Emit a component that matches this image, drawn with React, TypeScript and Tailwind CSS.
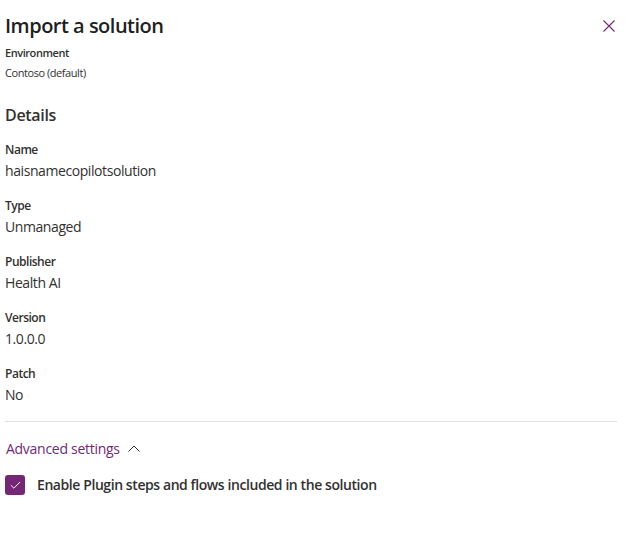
import { Check } from 'lucide-react'

const FIELDS = [
  { label: 'Name', value: 'haisnamecopilotsolution' },
  { label: 'Type', value: 'Unmanaged' },
  { label: 'Publisher', value: 'Health AI' },
  { label: 'Version', value: '1.0.0.0' },
  { label: 'Patch', value: 'No' },
]

export default function App() {
  return (
    <div className="h-[554px] w-[632px] bg-white pl-[5px] pr-[15px] text-[#323130] font-['Open_Sans',sans-serif]">
      <div className="flex h-[43px] items-start justify-between pt-[12px]">
        <h1 className="text-[20px] font-semibold leading-[28px] tracking-[-0.025em] text-[#201f1e]">Import a solution</h1>
        <button type="button" className="mr-[2px] mt-[8px] text-[#742774]" aria-label="Close">
          <svg width="12" height="12" viewBox="0 0 12 12" fill="none" stroke="currentColor" strokeWidth="1.1">
            <path d="M0.5 0.5 L11.5 11.5 M11.5 0.5 L0.5 11.5" />
          </svg>
        </button>
      </div>
      <div className="text-[11px] font-semibold leading-[20px] tracking-[-0.04em]">Environment</div>
      <div className="text-[11px] leading-[20px] tracking-[-0.04em]">Contoso (default)</div>

      <h2 className="mt-[20px] text-[16px] font-semibold leading-[24px] tracking-[-0.02em]">Details</h2>

      <div className="mt-[13px] flex flex-col gap-[14px]">
        {FIELDS.map((f) => (
          <div key={f.label}>
            <div className="text-[12px] font-semibold leading-[20px] tracking-[-0.04em]">{f.label}</div>
            <div className="text-[14px] leading-[22px] tracking-[-0.03em]">{f.value}</div>
          </div>
        ))}
      </div>

      <div className="mt-[15px] border-t border-[#e1dfdd]" />

      <button type="button" className="mt-[15px] flex items-center gap-[8px] pl-[1px] text-[14px] leading-[24px] tracking-[-0.02em] text-[#742774]">
        Advanced settings
        <svg width="12" height="7" viewBox="0 0 12 7" fill="none" stroke="#323130" strokeWidth="1" className="mb-[2px]">
          <path d="M0.5 6.5 L6 1 L11.5 6.5" />
        </svg>
      </button>

      <label className="mt-[14px] flex items-center gap-[12px]">
        <span className="flex h-[20px] w-[20px] items-center justify-center rounded-[3px] bg-[#742774]">
          <Check className="h-[13px] w-[13px] text-white" strokeWidth={1.75} />
        </span>
        <span className="text-[14px] font-semibold leading-[20px] tracking-[-0.03em]">Enable Plugin steps and flows included in the solution</span>
      </label>
    </div>
  )
}
